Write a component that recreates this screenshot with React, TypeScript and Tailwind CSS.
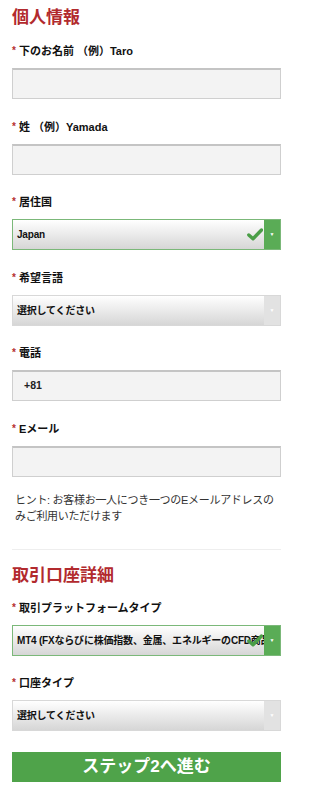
import type { ReactNode } from 'react'

const font = { fontFamily: '"Liberation Sans", "Noto Sans CJK JP", sans-serif' }

const Label = ({ children }: { children: ReactNode }) => (
  <div className="flex h-[14px] items-center text-[11px] font-bold leading-[14px] text-[#111]">
    <span className="mr-[3px] text-[10px] text-[#b5302f]">*</span>
    {children}
  </div>
)

const TextInput = ({ value }: { value?: string }) => (
  <div className="mt-[10px] flex h-[31px] items-center border border-[#cfcfcf] border-t-2 border-t-[#c4c4c4] bg-[#f3f3f3] px-[11px] text-[10.5px] font-bold text-[#222]">
    {value}
  </div>
)

const Check = () => (
  <svg width="16" height="13" viewBox="0 0 16 13">
    <path d="M1.8 7 L6 10.8 L14.5 2" fill="none" stroke="#4a9e47" strokeWidth="3.4" strokeLinecap="round" strokeLinejoin="round" />
  </svg>
)

const Select = ({ value, valid }: { value: string; valid?: boolean }) => (
  <div
    className={
      valid
        ? 'relative mt-[10px] flex h-[31px] items-stretch border border-[#7bb879] bg-gradient-to-b from-[#ffffff] to-[#d6d6d6]'
        : 'relative mt-[10px] flex h-[31px] items-stretch border border-[#d8d8d8] bg-gradient-to-b from-[#ffffff] to-[#d6d6d6]'
    }
  >
    <div className="flex min-w-0 flex-1 items-center overflow-hidden whitespace-nowrap pl-[4px] text-[10px] font-bold tracking-[-0.2px] text-[#111]">
      {value}
    </div>
    {valid ? (
      <div className="absolute right-[17px] top-[8px]">
        <Check />
      </div>
    ) : null}
    <div
      className={
        valid
          ? 'flex w-[16px] shrink-0 items-center justify-center bg-[#5aac56]'
          : 'flex w-[16px] shrink-0 items-center justify-center bg-[#e2e2e2]'
      }
    >
      <span className="text-[5px] leading-none text-white">▼</span>
    </div>
  </div>
)

const Field = ({ label, children }: { label: ReactNode; children: ReactNode }) => (
  <div className="mb-[20.5px]">
    <Label>{label}</Label>
    {children}
  </div>
)

export default function App() {
  return (
    <div className="min-h-screen w-[293px] bg-white px-[12px] pt-[6px]" style={font}>
      <h1 className="mb-[14px] text-[17px] font-bold leading-[24px] text-[#b22a2e]">個人情報</h1>
      <Field label="下のお名前 （例）Taro">
        <TextInput />
      </Field>
      <Field label="姓 （例）Yamada">
        <TextInput />
      </Field>
      <Field label="居住国">
        <Select value="Japan" valid />
      </Field>
      <Field label="希望言語">
        <Select value="選択してください" />
      </Field>
      <Field label="電話">
        <TextInput value="+81" />
      </Field>
      <div>
        <Label>Eメール</Label>
        <TextInput />
      </div>
      <p className="mt-[15px] pl-[3px] text-[11px] leading-[16px] tracking-[-0.3px] text-[#333]">
        ヒント: お客様お一人につき一つのEメールアドレスのみご利用いただけます
      </p>
      <div className="mt-[25px] border-t border-[#eeeeee]" />
      <h2 className="mb-[13px] mt-[14px] text-[17px] font-bold leading-[24px] text-[#b22a2e]">取引口座詳細</h2>
      <Field label="取引プラットフォームタイプ">
        <Select value="MT4 (FXならびに株価指数、金属、エネルギーのCFD商品)" valid />
      </Field>
      <Field label="口座タイプ">
        <Select value="選択してください" />
      </Field>
      <button
        type="button"
        className="mt-[6px] flex h-[30px] w-full items-center justify-center bg-[#4fa34a] text-[17px] font-bold text-white"
      >
        ステップ2へ進む
      </button>
    </div>
  )
}
